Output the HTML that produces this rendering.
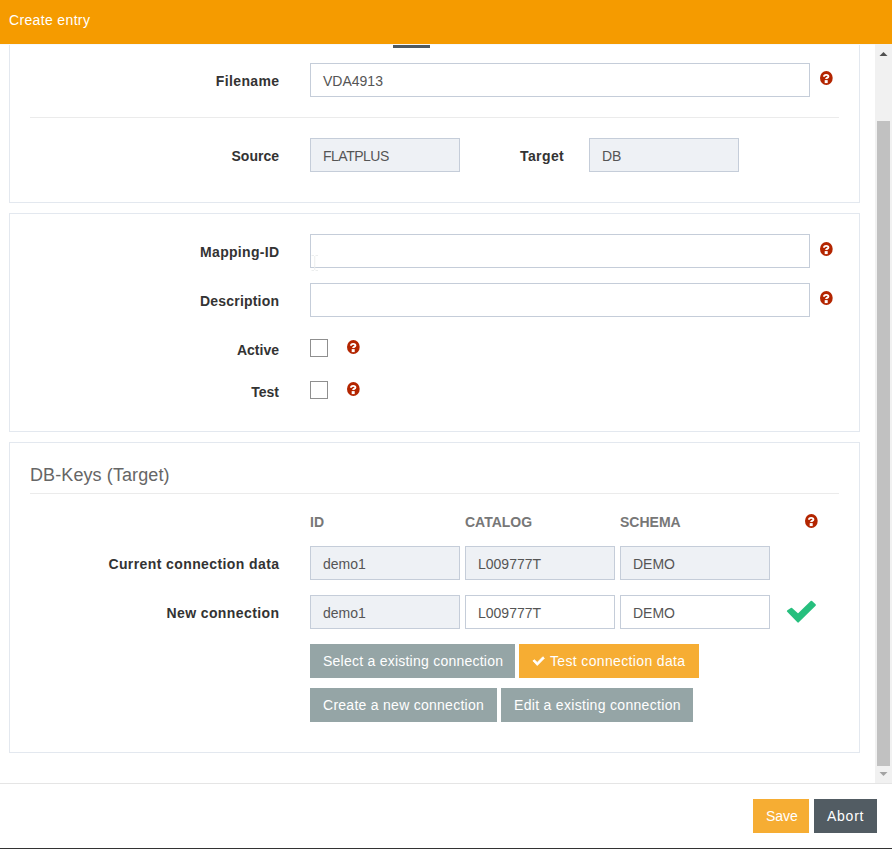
<!DOCTYPE html>
<html><head><meta charset="utf-8">
<style>
*{box-sizing:border-box;margin:0;padding:0}
html,body{width:892px;height:849px;overflow:hidden;background:#fff;font-family:"Liberation Sans",sans-serif}
.a{position:absolute}
.t{position:absolute;white-space:nowrap;line-height:14px;font-size:14px}
.hdr{left:0;top:0;width:892px;height:44px;background:#f59b00;z-index:5}
.hdr .t{color:#fff}
.panel{position:absolute;border:1px solid #e3e8ef;background:#fff}
.lbl{font-weight:bold;color:#333;text-align:right}
.inp{position:absolute;border:1px solid #c5cdd9;background:#fff;height:34px}
.ro{background:#eef1f5}
.itx{color:#555}
.hr{position:absolute;height:1px;background:#ebebeb}
.help{position:absolute;width:13px;height:13px}
.btn{position:absolute;height:34px;background:#95a5a6;color:#fff}
.btn .t{letter-spacing:0.35px}
.chk{position:absolute;width:18px;height:18px;border:1px solid #8f8f8f;background:#fff}
svg{position:absolute;overflow:visible}
</style></head><body>
<svg width="0" height="0" style="position:absolute">
<defs>
<g id="q"><ellipse cx="6.35" cy="7" rx="6.35" ry="6.95" fill="#b32500"/><path d="M4.0 5.7C4.0 4.4 5.0 3.9 6.2 3.9C7.4 3.9 8.4 4.5 8.4 5.5C8.4 6.6 7.0 6.8 6.2 7.6L6.2 8.1" fill="none" stroke="#fff" stroke-width="1.9"/><rect x="4.7" y="9.1" width="3.0" height="3.0" fill="#fff"/></g>
<path id="ck" d="M9.4 13.8L16.1 19.8L29.4 6.8L32.9 10.1L16.1 26.6L5.9 16.1Z" stroke-width="2" stroke-linejoin="round"/>
</defs></svg>
<div class="a hdr"><div class="t" style="left:9px;top:13px;letter-spacing:0.35px">Create entry</div></div>
<div class="a" style="left:0;top:44px;width:875px;height:1px;background:#f6f9fc;z-index:4"></div>
<div class="a" style="left:393px;top:45px;width:37px;height:3px;background:#4f5961;z-index:6"></div>

<!-- panel 1 -->
<div class="panel" style="left:9px;top:30px;width:851px;height:173px"></div>
<div class="t lbl" style="right:612.65px;top:74px;letter-spacing:0.35px">Filename</div>
<div class="inp" style="left:310px;top:63px;width:500px"></div>
<div class="t itx" style="left:323px;top:74px">VDA4913</div>
<svg style="left:820.2px;top:70.9px" width="13" height="14"><use href="#q"/></svg>
<div class="hr" style="left:30px;top:117px;width:809px"></div>
<div class="t lbl" style="right:613px;top:149px">Source</div>
<div class="inp ro" style="left:310px;top:138px;width:150px"></div>
<div class="t itx" style="left:323px;top:149px;letter-spacing:-0.5px">FLATPLUS</div>
<div class="t lbl" style="left:520px;top:149px;letter-spacing:0.4px">Target</div>
<div class="inp ro" style="left:589px;top:138px;width:150px"></div>
<div class="t itx" style="left:602px;top:149px">DB</div>

<!-- panel 2 -->
<div class="panel" style="left:9px;top:213px;width:851px;height:219px"></div>
<div class="t lbl" style="right:612.7px;top:245px;letter-spacing:0.3px">Mapping-ID</div>
<div class="inp" style="left:310px;top:234px;width:500px"></div>
<svg style="left:311px;top:255px" width="8" height="17"><path d="M0.5 0.5H3M4.5 0.5H7M3.75 1V15M0.5 15.5H3M4.5 15.5H7" stroke="#eceeee" stroke-width="1" fill="none"/></svg>
<svg style="left:820.3px;top:242px" width="13" height="14"><use href="#q"/></svg>
<div class="t lbl" style="right:612.8px;top:294px;letter-spacing:0.2px">Description</div>
<div class="inp" style="left:310px;top:283px;width:500px"></div>
<svg style="left:820.3px;top:291px" width="13" height="14"><use href="#q"/></svg>
<div class="t lbl" style="right:613px;top:343px">Active</div>
<div class="chk" style="left:310px;top:339px"></div>
<svg style="left:346.9px;top:339.9px" width="13" height="14"><use href="#q"/></svg>
<div class="t lbl" style="right:613px;top:385px">Test</div>
<div class="chk" style="left:310px;top:381px"></div>
<svg style="left:346.9px;top:381.9px" width="13" height="14"><use href="#q"/></svg>

<!-- panel 3 -->
<div class="panel" style="left:9px;top:442px;width:851px;height:311px"></div>
<div class="t" style="left:30px;top:466px;font-size:18px;line-height:18px;color:#666;letter-spacing:0.1px">DB-Keys (Target)</div>
<div class="hr" style="left:30px;top:493px;width:809px"></div>
<div class="t" style="left:310px;top:515.3px;font-weight:bold;color:#777">ID</div>
<div class="t" style="left:465px;top:515.3px;font-weight:bold;color:#777">CATALOG</div>
<div class="t" style="left:620px;top:515.3px;font-weight:bold;color:#777">SCHEMA</div>
<svg style="left:805.1px;top:513.9px" width="13" height="14"><use href="#q"/></svg>
<div class="t lbl" style="right:612.6px;top:557px;letter-spacing:0.4px">Current connection data</div>
<div class="inp ro" style="left:310px;top:546px;width:150px"></div>
<div class="t itx" style="left:323px;top:557px">demo1</div>
<div class="inp ro" style="left:465px;top:546px;width:150px"></div>
<div class="t itx" style="left:478px;top:557px">L009777T</div>
<div class="inp ro" style="left:620px;top:546px;width:150px"></div>
<div class="t itx" style="left:633px;top:557px">DEMO</div>
<div class="t lbl" style="right:612.6px;top:606px;letter-spacing:0.4px">New connection</div>
<div class="inp ro" style="left:310px;top:595px;width:150px"></div>
<div class="t itx" style="left:323px;top:606px">demo1</div>
<div class="inp" style="left:465px;top:595px;width:150px"></div>
<div class="t itx" style="left:478px;top:606px">L009777T</div>
<div class="inp" style="left:620px;top:595px;width:150px"></div>
<div class="t itx" style="left:633px;top:606px">DEMO</div>
<svg style="left:782px;top:595px" width="40" height="35" fill="#27bf7e" stroke="#27bf7e"><use href="#ck"/></svg>

<div class="btn" style="left:310px;top:644px;width:205px"><div class="t" style="left:13px;top:10px;letter-spacing:0.24px">Select a existing connection</div></div>
<div class="btn" style="left:519px;top:644px;width:180px;background:#f6ad33"><svg style="left:0;top:0" width="40" height="34" fill="#fff" stroke="#fff"><use href="#ck" transform="translate(11.42 9.75) scale(0.424 0.44)"/></svg><div class="t" style="left:31px;top:10px">Test connection data</div></div>
<div class="btn" style="left:310px;top:688px;width:187px"><div class="t" style="left:13px;top:10px;letter-spacing:0.27px">Create a new connection</div></div>
<div class="btn" style="left:501px;top:688px;width:192px"><div class="t" style="left:13px;top:10px;letter-spacing:0.31px">Edit a existing connection</div></div>

<!-- footer -->
<div class="a" style="left:0;top:783px;width:892px;height:1px;background:#e5e5e5"></div>
<div class="btn" style="left:753px;top:799px;width:56px;background:#f6ad33"><div class="t" style="left:13px;top:10px;letter-spacing:0">Save</div></div>
<div class="btn" style="left:814px;top:799px;width:63px;background:#525c63"><div class="t" style="left:13px;top:10px;letter-spacing:0.75px">Abort</div></div>
<div class="a" style="left:0;top:848px;width:892px;height:1px;background:#333"></div>

<!-- scrollbar -->
<div class="a" style="left:875px;top:44px;width:17px;height:739px;background:#f1f1f1"></div>
<div class="a" style="left:877px;top:121px;width:13px;height:645px;background:#c1c1c1"></div>
<svg style="left:879px;top:51px" width="9" height="6"><path d="M0.5 5L4.5 1L8.5 5Z" fill="#505050"/></svg>
<svg style="left:879px;top:771px" width="9" height="6"><path d="M0.5 1L4.5 5L8.5 1Z" fill="#a3a3a3"/></svg>
</body></html>
